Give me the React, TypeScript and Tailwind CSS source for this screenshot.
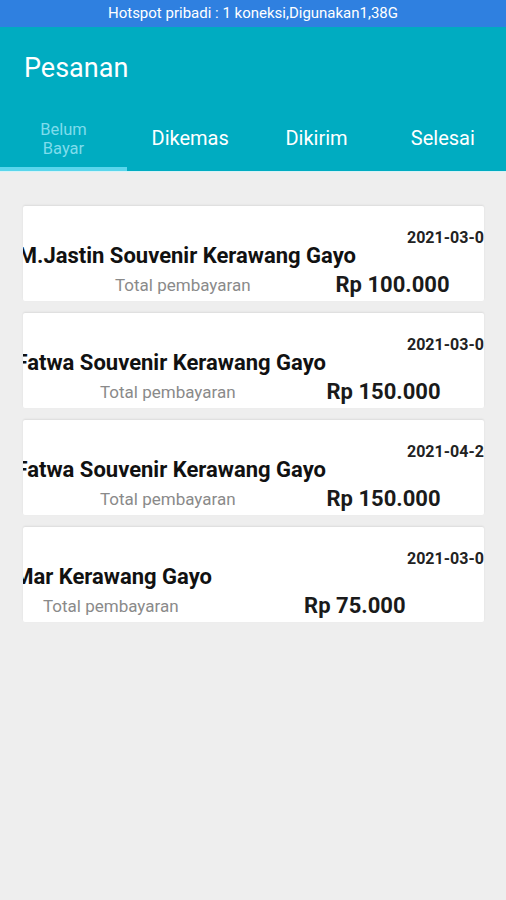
const orders = [
  {
    date: "2021-03-01",
    title: "M.Jastin Souvenir Kerawang Gayo",
    titleW: "w-[333px]",
    totalPl: "pl-[92px]",
    priceW: "w-[199px]",
    price: "Rp 100.000",
  },
  {
    date: "2021-03-02",
    title: "Fatwa Souvenir Kerawang Gayo",
    titleW: "w-[303px]",
    totalPl: "pl-[77px]",
    priceW: "w-[205px]",
    price: "Rp 150.000",
  },
  {
    date: "2021-04-20",
    title: "Fatwa Souvenir Kerawang Gayo",
    titleW: "w-[303px]",
    totalPl: "pl-[77px]",
    priceW: "w-[205px]",
    price: "Rp 150.000",
  },
  {
    date: "2021-03-01",
    title: "Mar Kerawang Gayo",
    titleW: "w-[189px]",
    totalPl: "pl-[20px]",
    priceW: "w-[227px]",
    price: "Rp 75.000",
  },
];

const tabs = ["Dikemas", "Dikirim", "Selesai"];

export default function App() {
  return (
    <div className="w-[506px] h-[900px] bg-[#eeeeee] font-['Roboto',sans-serif] overflow-hidden">
      {/* status bar */}
      <div className="h-[27px] bg-[#2f80e0] flex items-center justify-center text-white text-[15px]">
        Hotspot pribadi : 1 koneksi,Digunakan1,38G
      </div>

      {/* header */}
      <div className="bg-[#00acc1]">
        <div className="h-[84px] flex items-center pl-6 pb-[2px] text-white text-[27px]">Pesanan</div>
        <div className="flex h-[56px]">
          <div className="w-[127px] flex flex-col items-center justify-center text-[#7fdcec] text-[16.5px] leading-[19px]">
            <span>Belum</span>
            <span>Bayar</span>
          </div>
          {tabs.map((t) => (
            <div key={t} className="flex-1 flex items-center justify-center text-white text-[20px] pb-[2px]">
              {t}
            </div>
          ))}
        </div>
        <div className="h-[4px] flex">
          <div className="w-[127px] bg-[#5ad6ec]" />
        </div>
      </div>
      <div className="h-px bg-[#d6f3f7]" />

      {/* orders */}
      <div className="flex flex-col gap-3 pt-[34px] pl-[23px] pr-[22px]">
        {orders.map((o, i) => (
          <div
            key={i}
            className="h-[95px] bg-white rounded-[2px] overflow-hidden shadow-[0_-1px_2px_rgba(0,0,0,0.08)]"
          >
            <div className="mt-[23px] h-[18px] leading-[18px] pl-[384px] whitespace-nowrap text-[16px] font-bold text-[#222]">
              {o.date}
            </div>
            <div
              className={`${o.titleW} h-[18px] leading-[18px] flex justify-end whitespace-nowrap text-[22px] font-bold text-[#111]`}
            >
              {o.title}
            </div>
            <div className={`mt-[6px] h-[28px] flex items-center whitespace-nowrap ${o.totalPl}`}>
              <span className="text-[#8a8a8a] text-[17px] leading-[20px]">Total pembayaran</span>
              <div className={`${o.priceW} flex justify-end text-[22px] font-bold text-[#1a1a1a] leading-[26px]`}>
                {o.price}
              </div>
            </div>
          </div>
        ))}
      </div>
    </div>
  );
}
